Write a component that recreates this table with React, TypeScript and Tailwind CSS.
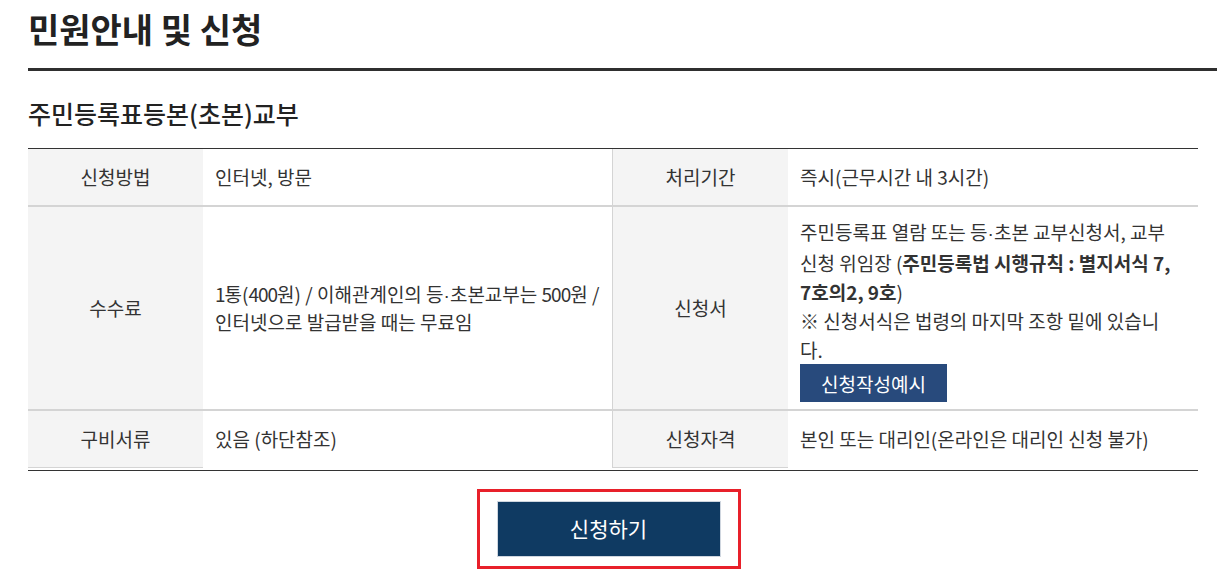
export default function App() {
  return (
    <div className="w-[1217px] h-[585px] overflow-hidden bg-white text-[#333] font-['Noto_Sans_CJK_KR','Noto_Sans',sans-serif]">
      {/* page title */}
      <div className="pl-[28px]">
        <h2 className="pt-[12px] h-[68px] text-[34px] leading-[34px] font-bold text-[#222]">
          민원안내 및 신청
        </h2>
        <div className="h-[3px] bg-[#2f2f2f]" />
      </div>

      {/* service block */}
      <div className="pl-[28px] w-[1198px]">
        <h3 className="mt-[30px] h-[47px] text-[25px] leading-[25px] font-medium text-[#222]">
          주민등록표등본(초본)교부
        </h3>

        <div className="border-t border-b border-[#333] pb-[2px] text-[19px]">
          {/* row 1 */}
          <div className="grid grid-cols-[175px_409px_176px_410px] border-b-2 border-[#d4d4d4]">
            <div className="h-[56px] flex items-center justify-center bg-[#f4f4f4]">신청방법</div>
            <div className="h-[56px] flex items-center px-[12px]">인터넷, 방문</div>
            <div className="h-[56px] flex items-center justify-center bg-[#f4f4f4] border-l border-[#d4d4d4]">
              처리기간
            </div>
            <div className="h-[56px] flex items-center px-[12px]">즉시(근무시간 내 3시간)</div>
          </div>

          {/* row 2 */}
          <div className="grid grid-cols-[175px_409px_176px_410px] border-b-2 border-[#d4d4d4]">
            <div className="flex items-center justify-center bg-[#f4f4f4]">수수료</div>
            <div className="flex items-center px-[12px] leading-[26px] whitespace-nowrap">
              <p>
                <span className="tracking-[-1px]">1</span>통(<span className="tracking-[-1px]">400</span>원) / 이해관계인의 등
                <span className="font-['Liberation_Sans']">·</span>초본교부는 <span className="tracking-[-1px]">500</span>원 /
                <br />
                인터넷으로 발급받을 때는 무료임
              </p>
            </div>
            <div className="flex items-center justify-center bg-[#f4f4f4] border-l border-[#d4d4d4]">
              신청서
            </div>
            <div className="px-[12px] pt-[10px] pb-[7px] leading-[29px] whitespace-nowrap">
              <p>
                주민등록표 열람 또는 등<span className="font-['Liberation_Sans']">·</span>초본 교부신청서, 교부
                <br />
                신청 위임장 (<b className="font-bold">주민등록법 시행규칙 : 별지서식 7,</b>
                <br />
                <b className="font-bold">7호의2, 9호</b>)
                <br />
                ※ 신청서식은 법령의 마지막 조항 밑에 있습니
                <br />
                다.
              </p>
              <button
                type="button"
                className="w-[147px] h-[38px] flex items-center justify-center bg-[#284a7c] text-white text-[19px]"
              >
                신청작성예시
              </button>
            </div>
          </div>

          {/* row 3 */}
          <div className="grid grid-cols-[175px_409px_176px_410px]">
            <div className="h-[57px] flex items-center justify-center bg-[#f4f4f4] border-b border-[#d4d4d4]">
              구비서류
            </div>
            <div className="h-[56px] flex items-center px-[12px]">있음 (하단참조)</div>
            <div className="h-[57px] flex items-center justify-center bg-[#f4f4f4] border-l border-b border-[#d4d4d4]">
              신청자격
            </div>
            <div className="h-[56px] flex items-center px-[12px]">본인 또는 대리인(온라인은 대리인 신청 불가)</div>
          </div>
        </div>
      </div>

      {/* apply button */}
      <div className="flex justify-center mt-[18px]">
        <div className="border-[3px] border-[#e8202a] px-[17px] py-[9px]">
          <button
            type="button"
            className="w-[224px] h-[56px] bg-[#0f3a62] border border-[#cfd6df] text-white text-[21px]"
          >
            신청하기
          </button>
        </div>
      </div>
    </div>
  );
}
